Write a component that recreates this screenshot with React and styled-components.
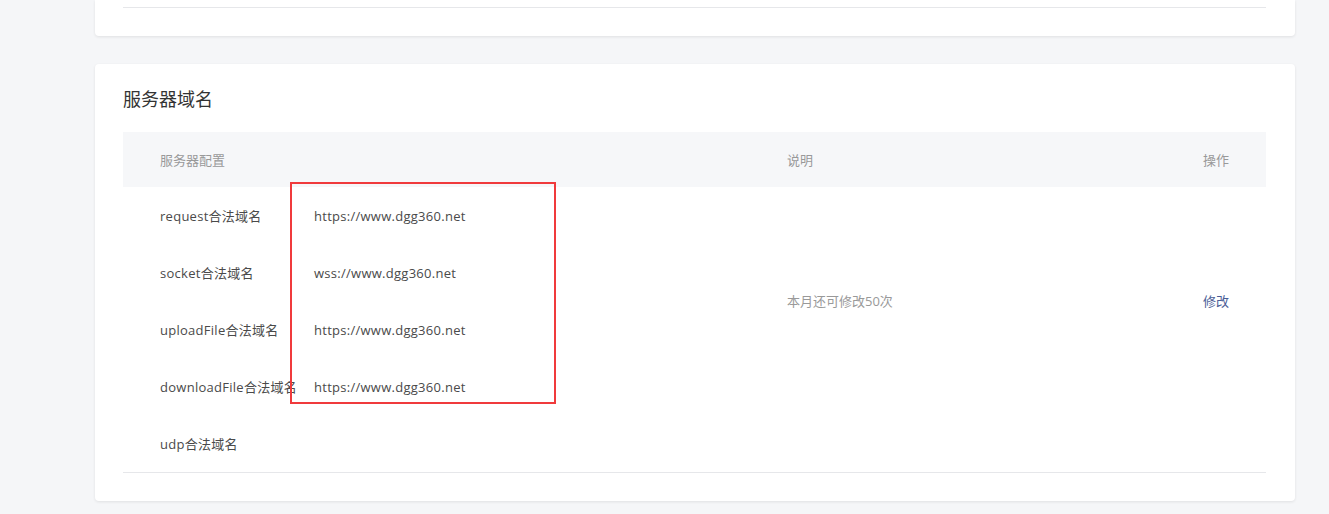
import React from 'react';
import styled, { createGlobalStyle } from 'styled-components';

const GlobalStyle = createGlobalStyle`
  html, body {
    margin: 0;
    padding: 0;
    background: #f5f6f8;
  }
  body {
    font-family: "Open Sans", "Noto Sans CJK SC", sans-serif;
    font-size: 13px;
    color: #444;
  }
`;

const domains = [
  { label: 'request合法域名', value: 'https://www.dgg360.net' },
  { label: 'socket合法域名', value: 'wss://www.dgg360.net' },
  { label: 'uploadFile合法域名', value: 'https://www.dgg360.net' },
  { label: 'downloadFile合法域名', value: 'https://www.dgg360.net' },
  { label: 'udp合法域名', value: '' },
];

const App = () => (
  <Page>
    <GlobalStyle />
    <Card top>
      <Divider />
    </Card>
    <Card>
      <Title>服务器域名</Title>
      <Table>
        <HeadRow>
          <HeadCell>服务器配置</HeadCell>
          <HeadCell>说明</HeadCell>
          <HeadCell align="right">操作</HeadCell>
        </HeadRow>
        <Body>
          <ConfigList>
            {domains.map(d => (
              <ConfigRow key={d.label}>
                <Label>{d.label}</Label>
                <Value>{d.value}</Value>
              </ConfigRow>
            ))}
          </ConfigList>
          <Note>本月还可修改50次</Note>
          <Action href="#">修改</Action>
          <Highlight />
        </Body>
      </Table>
    </Card>
  </Page>
);

const Page = styled.div`
  width: 1200px;
  margin-left: 95px;
  display: flex;
  flex-direction: column;
  gap: 28px;
  padding-bottom: 14px;
`;

const Card = styled.section`
  background: #fff;
  border-radius: ${p => (p.top ? '0 0 4px 4px' : '4px')};
  box-shadow: 0 1px 3px rgba(0, 0, 0, 0.09);
  padding: ${p => (p.top ? '7px 29px 28px 28px' : '22px 29px 28px 28px')};
`;

const Divider = styled.div`
  border-top: 1px solid #e6e7ea;
`;

const Title = styled.h2`
  margin: 0 0 22px;
  font-size: 18px;
  font-weight: normal;
  line-height: 24px;
  color: #333;
  font-family: "Noto Sans CJK SC", sans-serif;
`;

const Table = styled.div`
  border-bottom: 1px solid #e6e7ea;
`;

const columns = '627px 1fr 100px';

const HeadRow = styled.div`
  display: grid;
  grid-template-columns: ${columns};
  align-items: center;
  height: 55px;
  padding: 0 37px;
  background: #f6f7f9;
`;

const HeadCell = styled.div`
  color: #999;
  text-align: ${p => p.align || 'left'};
  font-family: "Noto Sans CJK SC", sans-serif;
`;

const Body = styled.div`
  position: relative;
  display: grid;
  grid-template-columns: ${columns};
  grid-template-rows: repeat(5, 57px);
  padding: 0 37px;
`;

const ConfigList = styled.div`
  grid-column: 1;
  grid-row: 1 / span 5;
  display: grid;
  grid-template-rows: repeat(5, 57px);
`;

const ConfigRow = styled.div`
  display: grid;
  grid-template-columns: 154px 1fr;
  align-items: center;
  letter-spacing: 0.27px;
`;

const Label = styled.span`
  color: #4a4a4a;
  white-space: nowrap;
`;

const Value = styled.span`
  color: #4a4a4a;
`;

const Note = styled.div`
  grid-column: 2;
  grid-row: 1 / span 4;
  align-self: center;
  margin-top: -1px;
  color: #999;
`;

const Action = styled.a`
  grid-column: 3;
  grid-row: 1 / span 4;
  align-self: center;
  justify-self: end;
  margin-top: -1px;
  color: #4a5d96;
  text-decoration: none;
  font-family: "Noto Sans CJK SC", sans-serif;
`;

const Highlight = styled.div`
  position: absolute;
  left: 167px;
  top: -5px;
  width: 262px;
  height: 218px;
  border: 2px solid #f03a3c;
  pointer-events: none;
`;

export default App;
